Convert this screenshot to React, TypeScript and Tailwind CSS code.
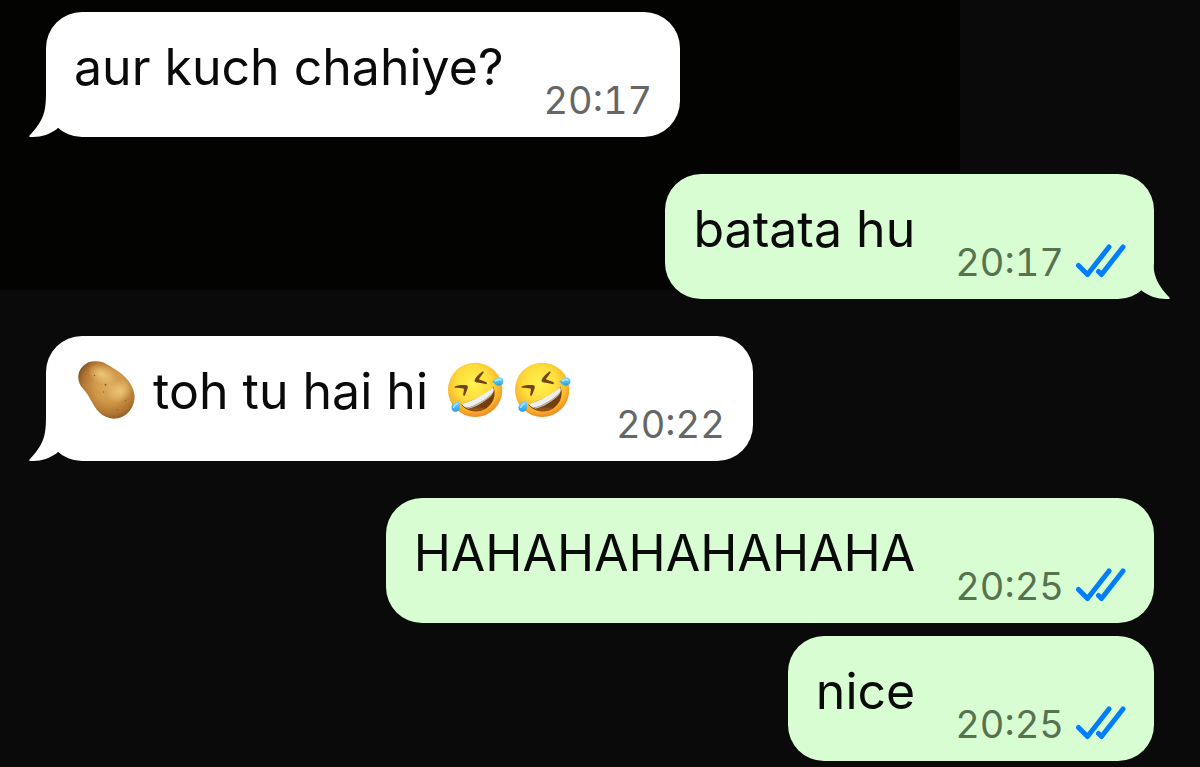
import { useId } from 'react';

type Message = {
  id: number;
  text: string;
  time: string;
  sent: boolean;
  tail?: boolean;
  spacing: string;
};

const messages: Message[] = [
  { id: 1, text: 'aur kuch chahiye?', time: '20:17', sent: false, tail: true, spacing: '' },
  { id: 2, text: 'batata hu', time: '20:17', sent: true, tail: true, spacing: 'mt-[37px]' },
  { id: 3, text: '🥔 toh tu hai hi 🤣🤣', time: '20:22', sent: false, tail: true, spacing: 'mt-[37px]' },
  { id: 4, text: 'HAHAHAHAHAHAHA', time: '20:25', sent: true, spacing: 'mt-[37px]' },
  { id: 5, text: 'nice', time: '20:25', sent: true, spacing: 'mt-[13px]' },
];

function Potato() {
  const id = useId();
  return (
    <svg viewBox="0 0 172 176" role="img" aria-label="🥔" className="mx-1 inline-block h-[58px] w-[57px] align-[-10px]">
      <defs>
        <radialGradient id={`${id}a`} cx="0.56" cy="0.44" r="0.62">
          <stop offset="0" stopColor="#e0ae60" />
          <stop offset="0.45" stopColor="#cf9748" />
          <stop offset="0.78" stopColor="#b07430" />
          <stop offset="1" stopColor="#7c4f24" />
        </radialGradient>
        <radialGradient id={`${id}b`}>
          <stop offset="0" stopColor="#edc677" />
          <stop offset="1" stopColor="#edc677" stopOpacity="0" />
        </radialGradient>
      </defs>
      <path
        d="M51 1C74 -2 93 13 112 25C144 43 167 73 171 103C174 143 144 175 109 175C79 175 58 154 45 130C35 112 29 100 15 84C-4 65 -5 35 14 16C25 5 37 1 51 1Z"
        fill={`url(#${id}a)`}
      />
      <ellipse cx="72" cy="40" rx="46" ry="30" transform="rotate(25 72 40)" fill={`url(#${id}b)`} />
      <ellipse cx="126" cy="92" rx="42" ry="32" transform="rotate(-35 126 92)" fill={`url(#${id}b)`} />
      <g fill="#8b5b27">
        <circle cx="50" cy="44" r="2" />
        <circle cx="83" cy="72" r="3" />
        <circle cx="77" cy="94" r="2" />
        <circle cx="144" cy="120" r="2" />
        <circle cx="119" cy="148" r="2" />
      </g>
    </svg>
  );
}

function Laughing() {
  const id = useId();
  return (
    <svg viewBox="0 0 172 172" role="img" aria-label="🤣" className="mx-[5px] inline-block size-[57px] align-[-10px]">
      <defs>
        <radialGradient id={`${id}face`} cx="0.46" cy="0.38" r="0.64">
          <stop offset="0" stopColor="#fff34f" />
          <stop offset="0.5" stopColor="#fddc3b" />
          <stop offset="0.78" stopColor="#f9b62c" />
          <stop offset="1" stopColor="#ea8321" />
        </radialGradient>
        <linearGradient id={`${id}tear`} x1="0" y1="0" x2="0" y2="1">
          <stop offset="0" stopColor="#8bdcfa" />
          <stop offset="1" stopColor="#249ce4" />
        </linearGradient>
      </defs>
      <circle cx="85" cy="84" r="82" fill={`url(#${id}face)`} />
      <path
        d="M107 29C97 36 85 48 83 56C83 59 86 61 90 62C99 63 111 66 119 67C121 65 121 63 118 60C110 57 101 54 96 52C101 45 106 38 111 31C111 29 109 28 107 29Z"
        fill="#714316"
      />
      <path
        d="M24 74C32 70 49 69 59 70C63 71 64 75 62 80C60 87 56 96 53 102C50 103 49 101 49 98C50 92 51 85 51 81C43 79 32 79 25 78C22 77 22 75 24 74Z"
        fill="#714316"
      />
      <path d="M43 128C65 121 117 102 140 75C149 96 142 125 118 140C91 156 57 148 43 128Z" fill="#763e0b" />
      <path d="M45 127C74 118 114 98 139 76C142 82 142 87 139 92C119 113 87 133 58 138C52 136 48 132 45 127Z" fill="#eeeeed" />
      <path d="M58 138C87 133 119 113 139 92C138 95 137 98 135 100C114 120 87 137 63 141Z" fill="#bcb9b5" />
      <path d="M63 143C82 135 104 137 119 139C99 152 78 151 63 143Z" fill="#935016" />
      <path d="M136 60C143 55 148 47 158 46C168 46 172 54 170 61C167 71 155 74 148 69C144 66 141 62 136 60Z" fill={`url(#${id}tear)`} />
      <path d="M40 116C32 119 20 122 16 129C11 137 13 147 22 150C32 152 38 146 39 138C40 130 38 123 40 116Z" fill={`url(#${id}tear)`} />
      <path d="M146 57C151 54 156 51 162 54" fill="none" stroke="#b8efff" strokeWidth="4" strokeLinecap="round" />
      <path d="M20 137C20 132 25 129 30 126" fill="none" stroke="#b8efff" strokeWidth="4" strokeLinecap="round" />
    </svg>
  );
}

function MessageText({ text }: { text: string }) {
  return (
    <p className="mt-[22px] text-[50px]/[66px] whitespace-nowrap text-[#0a0a0a]">
      {text.split(/(🥔|🤣)/u).map((part, i) => {
        if (part === '🥔') return <Potato key={i} />;
        if (part === '🤣') return <Laughing key={i} />;
        return part;
      })}
    </p>
  );
}

function ReadTicks() {
  return (
    <svg viewBox="0 0 50 34" role="img" aria-label="Read" className="mb-[21px] ml-3 h-[34px] w-[50px] shrink-0">
      <g fill="none" stroke="#027dfc" strokeWidth="5" strokeLinecap="round" strokeLinejoin="round">
        <path d="M2.5 21.5L11.5 30.5L33 3" />
        <path d="M22.5 27.5L25.5 30.5L47 3" />
      </g>
    </svg>
  );
}

function Tail({ sent }: { sent: boolean }) {
  return (
    <svg
      viewBox="0 0 48 62"
      aria-hidden="true"
      className={
        sent
          ? 'absolute -right-4 bottom-0 -z-10 h-[62px] w-12 -scale-x-100 fill-[#d8fdd2]'
          : 'absolute bottom-0 -left-[17px] -z-10 h-[62px] w-12 fill-white'
      }
    >
      <path d="M17 0V18C17 38 14 46 1 60C-1 62 1 62 4 62C13 62 21 59 28 54L46 32V0Z" />
    </svg>
  );
}

function Bubble({ message }: { message: Message }) {
  const { text, time, sent, tail, spacing } = message;
  return (
    <li className={`flex ${sent ? 'justify-end' : 'justify-start'} ${spacing}`}>
      <div
        className={`relative isolate flex h-[125px] rounded-[36px] px-7 ${sent ? 'bg-[#d8fdd2]' : 'bg-white'}`}
      >
        {tail && <Tail sent={sent} />}
        <MessageText text={text} />
        <div className="ml-10 flex items-end">
          <time className={`mb-3 text-[38px]/[50px] tabular-nums ${sent ? 'text-[#57724f]' : 'text-[#666666]'}`}>
            {time}
          </time>
          {sent && <ReadTicks />}
        </div>
      </div>
    </li>
  );
}

export default function App() {
  return (
    <main className="min-h-screen bg-[#0a0a0a] bg-[linear-gradient(#030302,#030302)] bg-[length:80%_290px] bg-no-repeat font-['Inter','Liberation_Sans',sans-serif]">
      <ul className="px-[46px] pt-3 pb-1.5">
        {messages.map((message) => (
          <Bubble key={message.id} message={message} />
        ))}
      </ul>
    </main>
  );
}
